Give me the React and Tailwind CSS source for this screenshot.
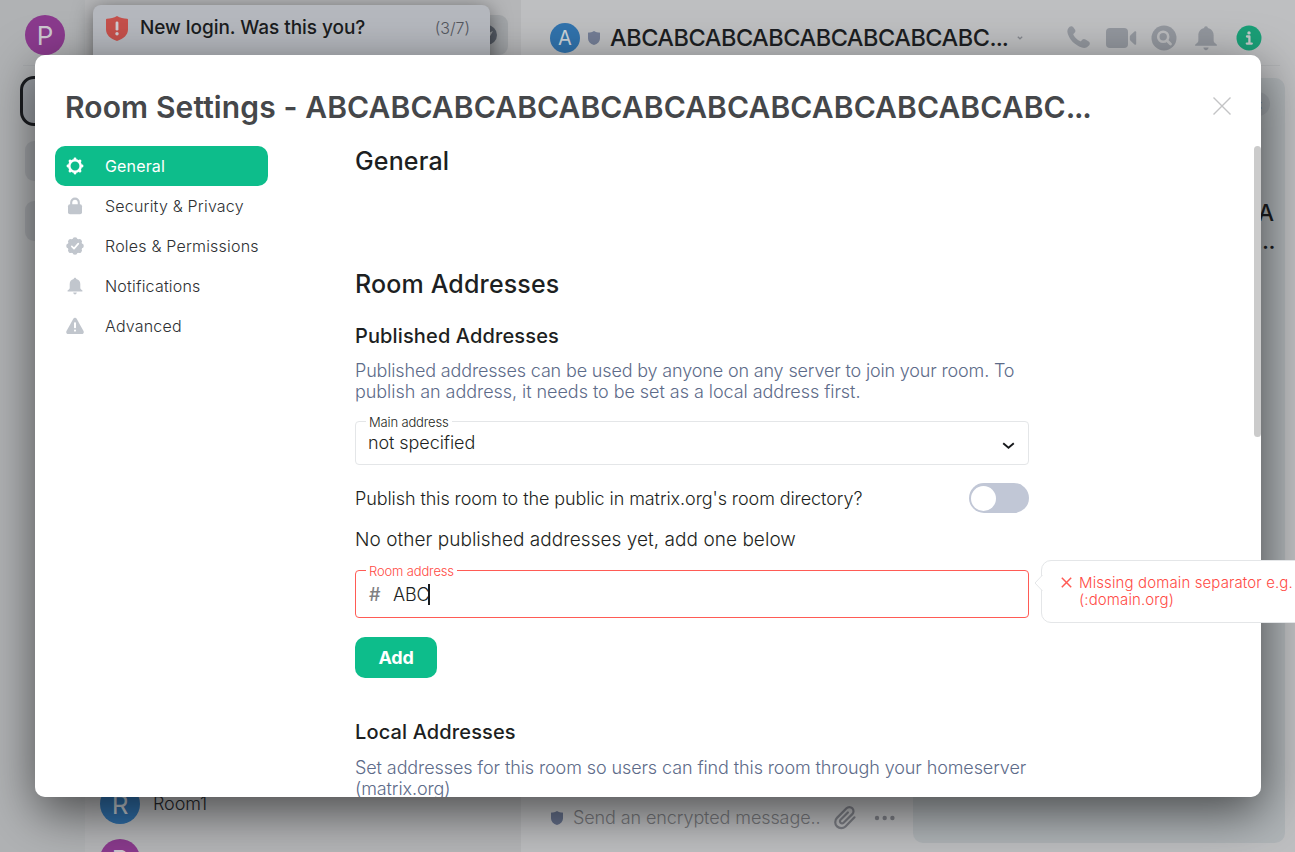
import React from 'react';

const ANGLES = [0, 45, 90, 135, 180, 225, 270, 315];

const GearIcon = () => (
  <svg width="18" height="18" viewBox="0 0 18 18">
    <circle cx="9" cy="9" r="5.7" fill="none" stroke="currentColor" strokeWidth="2.5" />
    {ANGLES.map((a) => (
      <rect key={a} x="7.6" y="0.6" width="2.8" height="3" rx="1.1" fill="currentColor" transform={`rotate(${a} 9 9)`} />
    ))}
  </svg>
);

const LockIcon = () => (
  <svg width="18" height="18" viewBox="0 0 18 18">
    <rect x="2" y="7.2" width="14" height="10" rx="2" fill="currentColor" />
    <path d="M5.2 8.5V5.400a3.800 3.800 0 0 1 7.600 0v3.300" fill="none" stroke="currentColor" strokeWidth="2.1" />
  </svg>
);

const BadgeIcon = () => (
  <svg width="18" height="18" viewBox="0 0 18 18">
    <circle cx="9" cy="9" r="7.4" fill="currentColor" />
    {ANGLES.map((a) => (
      <circle key={a} cx="9" cy="2.6" r="2.4" fill="currentColor" transform={`rotate(${a} 9 9)`} />
    ))}
    <path d="M5.8 9.4l2.2 2.2 4.3-5" fill="none" stroke="#fff" strokeWidth="1.7" strokeLinecap="round" strokeLinejoin="round" />
  </svg>
);

const BellIcon = ({ size = 18 }) => (
  <svg width={size} height={size} viewBox="0 0 18 18">
    <path
      d="M9 .8c.8 0 1.3.6 1.300 1.300C12.900 2.700 14.300 4.700 14.300 7.100v3.600c0 1 .5 1.600 1.500 2.200.5.3.8.7.8 1.100 0 .2-.2.4-.5.4H1.900c-.3 0-.5-.2-.5-.4 0-.4.3-.8.8-1.100 1-.6 1.500-1.200 1.500-2.200V7.100c0-2.400 1.400-4.400 4-5C7.700 1.400 8.200.8 9 .8z"
      fill="currentColor"
    />
    <path d="M7.200 15.600h3.600c-.1 1-.8 1.800-1.800 1.800s-1.700-.8-1.800-1.800z" fill="currentColor" />
  </svg>
);

const WarningIcon = () => (
  <svg width="18" height="18" viewBox="0 0 18 18">
    <path d="M9 .8c.8 0 1.400.4 1.800 1.100l6.700 12.200c.7 1.400-.1 2.900-1.700 2.900H2.200C.6 17-.2 15.500.5 14.100L7.200 1.900C7.600 1.200 8.200.8 9 .8z" fill="currentColor" />
    <rect x="8" y="5.200" width="2" height="6" rx="0.8" fill="#fff" />
    <rect x="8" y="12.400" width="2" height="2.200" rx="0.9" fill="#fff" />
  </svg>
);

const ShieldIcon = ({ className }) => (
  <svg className={className} width="12" height="14" viewBox="0 0 12 14">
    <path d="M6 0c1.700 1 3.800 1.500 5.600 1.600.2 0 .4.2.4.4v5.400c0 3-2.300 5.200-6 6.600C2.300 12.600 0 10.400 0 7.400V2c0-.2.2-.4.4-.4C2.200 1.500 4.300 1 6 0z" fill="currentColor" />
  </svg>
);

const PhoneIcon = () => (
  <svg width="26" height="26" viewBox="0 0 26 26">
    <path
      d="M3.600 1.800c1.200-1 2.700-.9 3.700.4l1.600 2.200c.8 1.100.7 2.400-.3 3.400l-1 .9c-.4.4-.4.8-.1 1.300 1.600 2.700 3.700 4.700 6.400 6.100.5.3.9.2 1.300-.2l1-1.100c.9-1 2.200-1.100 3.300-.3l3.200 2.100c1.300.9 1.500 2.500.5 3.700-1.800 2.300-4.500 3.200-7.400 2.200C8.500 19.900 3.700 14.900 1.700 8.500.9 6 1.500 3.600 3.600 1.800z"
      fill="currentColor"
    />
  </svg>
);

const VideoIcon = () => (
  <svg width="31" height="20" viewBox="0 0 31 20">
    <rect x="0" y="0" width="22" height="20" rx="4" fill="currentColor" />
    <path d="M24.500 7.200l4-3.600c.7-.6 1.700-.2 1.700.7v11.400c0 .9-1 1.300-1.700.7l-4-3.600c-.5-.5-.7-1-.7-1.700V8.900c0-.7.2-1.200.7-1.700z" fill="currentColor" />
  </svg>
);

const SearchIcon = () => (
  <svg width="26" height="26" viewBox="0 0 26 26">
    <circle cx="13" cy="13" r="12.500" fill="currentColor" />
    <circle cx="12.200" cy="11.800" r="5" fill="none" stroke="#bbbcbe" strokeWidth="2.600" />
    <path d="M15.900 15.500l3.600 3.500" stroke="#bbbcbe" strokeWidth="2.800" strokeLinecap="round" />
  </svg>
);

const InfoIcon = () => (
  <svg width="26" height="26" viewBox="0 0 26 26">
    <circle cx="13" cy="13" r="12.500" fill="#1a9f77" />
    <circle cx="13" cy="7.900" r="1.700" fill="#c4c8c8" />
    <path d="M11 11.500h2.400v7M10.800 18.600h5" fill="none" stroke="#c4c8c8" strokeWidth="2.300" strokeLinecap="round" strokeLinejoin="round" />
  </svg>
);

const TABS = [
  { label: 'General', Icon: GearIcon, active: true },
  { label: 'Security & Privacy', Icon: LockIcon },
  { label: 'Roles & Permissions', Icon: BadgeIcon },
  { label: 'Notifications', Icon: BellIcon },
  { label: 'Advanced', Icon: WarningIcon },
];

function Backdrop() {
  return (
    <div className="flex h-full w-full">
      <div className="flex w-[85px] shrink-0 flex-col bg-[#b0b2b4] pt-[15px]">
        <div className="ml-[25px] flex h-10 w-10 items-center justify-center rounded-full bg-[#8a3a8d] text-[26px] text-[#ccc7cf]">P</div>
        <div className="mt-[10px] ml-[23px] h-px w-10 bg-[#a8aaad]" />
        <div className="mt-[10px] ml-5 h-[50px] w-[50px] rounded-[14px] border-[3px] border-[#1a1c20] bg-[#9b9fa5]" />
        <div className="mt-[15px] ml-[25px] h-10 w-10 rounded-[9px] bg-[#a0a3a7]" />
        <div className="mt-5 ml-[25px] h-10 w-10 rounded-[9px] bg-[#a0a3a7]" />
      </div>
      <div className="flex w-[436px] shrink-0 flex-col overflow-hidden bg-[#b5b6b8] pt-[15px] *:shrink-0">
        <div className="ml-[383px] flex h-10 w-10 items-center justify-center rounded-[9px] bg-[#a4a7aa]">
          <svg width="26" height="26" viewBox="0 0 26 26">
            <circle cx="12" cy="13" r="10" fill="#5b626c" />
            <path d="M18 9l-4 7-7 3 4-7z" fill="#a4a7aa" />
          </svg>
        </div>
        <div className="mt-[729px] ml-[15px] flex h-10 items-center gap-[13px]">
          <div className="flex h-10 w-10 items-center justify-center rounded-full bg-[#2f6ea8] text-[26px] text-[#c5ccd2]">R</div>
          <span className="pb-[2px] text-[18px] font-light tracking-[-0.1px] text-[#25272b]">Room1</span>
        </div>
        <div className="mt-[15px] ml-[15px] flex h-10 w-10 items-center justify-center rounded-full bg-[#8a3a8d] text-[26px] text-[#ccc7cf]">P</div>
      </div>
      <div className="flex min-w-0 flex-1 flex-col bg-[#bebfc1]">
        <div className="flex h-[65px] shrink-0 items-center pt-[11px] pl-[29px]">
          <div className="flex h-[30px] w-[30px] items-center justify-center rounded-full bg-[#3173ad] text-[20px] text-[#cdd3d8]">A</div>
          <ShieldIcon className="ml-2 shrink-0 text-[#747e96]" />
          <div className="ml-[10px] w-[400px] text-[23.5px] font-[550] tracking-[-0.48px] whitespace-nowrap text-[#1c1e22]">
            ABCABCABCABCABCABCABCABC<span className="tracking-[-1px]">...</span>
          </div>
          <svg className="ml-[7px]" width="6" height="4" viewBox="0 0 6 4"><path d="M.8.8L3 2.800 5.200.8" fill="none" stroke="#85888e" strokeWidth="1.300" /></svg>
          <div className="ml-[43px] flex items-center text-[#93979e]">
            <PhoneIcon />
            <div className="ml-[14px]"><VideoIcon /></div>
            <div className="ml-[14px]"><SearchIcon /></div>
            <div className="ml-[16px]"><BellIcon size={26} /></div>
            <div className="ml-[17px]"><InfoIcon /></div>
          </div>
        </div>
        <div className="mr-[15px] ml-[10px] h-px bg-[#b4b6b8]" />
        <div className="flex flex-1 pt-[12px]">
          <div className="flex w-[392px] flex-col justify-end">
            <div className="mb-[21px] flex items-center pl-[30px]">
              <ShieldIcon className="shrink-0 text-[#65708b]" />
              <span className="ml-[10px] w-[248px] text-[18px] font-light tracking-[-0.1px] whitespace-nowrap text-[#77787c]">Send an encrypted message..</span>
              <svg className="ml-[12px]" width="24" height="26" viewBox="0 0 24 26">
                <path d="M21.500 12.300l-9 9.100a6 6 0 0 1-8.500 0 6 6 0 0 1 0-8.500l9.500-9.600a4.100 4.100 0 0 1 5.800 0 4.100 4.100 0 0 1 0 5.800l-8.700 8.700a2.100 2.100 0 0 1-3 0 2.100 2.100 0 0 1 0-3l7.300-7.300" fill="none" stroke="#7d7f86" strokeWidth="2.200" strokeLinecap="round" />
              </svg>
              <svg className="ml-[17px]" width="22" height="6" viewBox="0 0 22 6">
                <g fill="#7d7f86"><circle cx="3" cy="3" r="2.200" /><circle cx="10.700" cy="3" r="2.200" /><circle cx="18.400" cy="3" r="2.200" /></g>
              </svg>
            </div>
          </div>
          <div className="mb-[9px] flex w-[372px] flex-col items-end rounded-[10px] bg-[#b0b5b8] pt-[14px]">
            <div className="mr-[15px] flex h-6 w-6 items-center justify-center rounded-full bg-[#a3a8ad] text-[16px] text-[#6f747b]">×</div>
            <div className="mt-[83px] mr-[11px] text-right text-[23px] leading-[28px] font-[550] text-[#1c1e22]">ABCABCA<br />BCA<span className="-mr-[1px] tracking-[-0.5px]">...</span></div>
          </div>
        </div>
      </div>
    </div>
  );
}

function Toast() {
  return (
    <div className="absolute top-[5px] left-[93px] flex h-[100px] w-[397px] items-start rounded-lg bg-[#b5b8be] px-[13px] pt-[11px] shadow-[0_4px_20px_rgba(0,0,0,0.5)]">
      <svg width="22" height="25" viewBox="0 0 22 25">
        <path d="M11 0c3 1.800 6.700 2.500 10.100 2.700.5 0 .9.3.9.8v9.700c0 5.600-4.300 9.500-11 11.800C4.300 22.700 0 18.800 0 13.200V3.500c0-.5.4-.8.9-.8C4.300 2.500 8 1.800 11 0z" fill="#c5504b" />
        <path d="M11 6.800v6.400" stroke="#cfcbd0" strokeWidth="2.800" strokeLinecap="round" />
        <circle cx="11" cy="17.800" r="1.700" fill="#cfcbd0" />
      </svg>
      <span className="ml-[12px] text-[19px] leading-6 font-[550] tracking-[-0.05px] whitespace-nowrap text-[#1a1c20]">New login. Was this you?</span>
      <span className="ml-auto pr-[7px] text-[16px] leading-6 font-light text-[#54575e]">(3/7)</span>
    </div>
  );
}

function Field({ label, className, labelClass, children }) {
  return (
    <div className={`relative flex items-center rounded border ${className}`}>
      <span className={`absolute -top-[7px] left-[10px] bg-white px-[3px] text-[13px] leading-[14px] whitespace-nowrap ${labelClass}`}>{label}</span>
      {children}
    </div>
  );
}

function GeneralPane() {
  return (
    <div className="flex w-[674px] shrink-0 flex-col text-[18px] leading-[21px] font-light text-[#1d1f22] *:shrink-0">
      <h2 className="h-[30px] text-[25px] leading-[30px] font-[550] tracking-[0.15px]">General</h2>
      <h2 className="mt-[93px] h-[30px] text-[25px] leading-[30px] font-[550] tracking-[0.15px]">Room Addresses</h2>
      <h3 className="mt-[25px] h-[24px] text-[20px] leading-[24px] font-[550] tracking-[0.13px]">Published Addresses</h3>
      <p className="mt-3 tracking-[-0.155px] whitespace-nowrap text-[#5d6b89]">Published addresses can be used by anyone on any server to join your room. To<br /><span className="tracking-[-0.05px]">publish an address, it needs to be set as a local address first.</span></p>
      <Field label="Main address" className="mt-[19px] h-[44px] border-[#e4e6e8] pr-[13px] pl-3" labelClass="font-light text-[#1d1f22] tracking-[-0.15px]">
        <span className="-mt-px flex-1 tracking-[-0.08px]">not specified</span>
        <svg width="13" height="8" viewBox="0 0 13 8" className="mt-[5px]"><path d="M1.200 1.300l5.300 4.500 5.300-4.500" fill="none" stroke="#17191c" strokeWidth="1.900" /></svg>
      </Field>
      <div className="mt-[18px] flex h-[30px] items-center justify-between">
        <span className="tracking-[-0.08px]">Publish this room to the public in matrix.org's room directory?</span>
        <div className="flex h-[30px] w-[60px] items-center rounded-full bg-[#c1c7d6] pl-[2px]"><div className="h-[25px] w-[25px] rounded-full bg-white" /></div>
      </div>
      <p className="mt-4 text-[19px] tracking-[0.04px] whitespace-nowrap">No other published addresses yet, add one below</p>
      <Field label="Room address" className="mt-5 h-[48px] border-[#ff5b55] pl-3" labelClass="font-light text-[#ff4b45] tracking-[-0.15px]">
        <span className="w-[25px] pl-px font-medium text-[#808082]">#</span>
        <span className="text-[18px] tracking-[-0.2px]">ABC</span>
        <span className="-ml-px h-[21px] w-[2px] bg-[#17191c]" />
      </Field>
      <button className="mt-[19px] h-[41px] w-[82px] rounded-[10px] bg-[#0dbd8b] text-[18px] font-bold tracking-[-0.2px] text-white">Add</button>
      <h3 className="mt-[42px] h-[24px] text-[20px] leading-[24px] font-[550] tracking-[0.13px]">Local Addresses</h3>
      <p className="mt-[13px] tracking-[-0.1px] whitespace-nowrap text-[#5d6b89]">Set addresses for this room so users can find this room through your homeserver<br />(matrix.org)</p>
    </div>
  );
}

function Dialog() {
  return (
    <div className="absolute top-[55px] left-[35px] flex h-[742px] w-[1226px] flex-col overflow-hidden rounded-[10px] bg-white">
      <div className="flex h-[91px] shrink-0 items-center justify-between pt-[13px] pr-[30px] pl-[30px]">
        <h1 className="text-[30px] font-semibold tracking-[0.12px] whitespace-nowrap text-[#45474a]">
          Room Settings - ABCABCABCABCABCABCABCABCABCABCABCABC<span className="tracking-[-1.3px]">...</span>
        </h1>
        <svg className="mb-[2px]" width="18" height="18" viewBox="0 0 18 18"><path d="M.5.5l17 17M17.500.5l-17 17" stroke="#c3c4c5" strokeWidth="1.400" /></svg>
      </div>
      <div className="flex min-h-0 flex-1 pl-5">
        <nav className="mr-[87px] w-[213px] shrink-0">
          {TABS.map(({ label, Icon, active }) => (
            <div key={label} className={`flex h-10 items-center rounded-[10px] pl-[11px] text-[16px] whitespace-nowrap ${active ? 'bg-[#0dbd8b] font-normal tracking-[0.15px] text-white' : 'font-light tracking-[0.2px] text-[#2e3033]'}`}>
              <span className={active ? 'text-white' : 'text-[#c1c6cd]'}><Icon /></span>
              <span className="ml-[21px]">{label}</span>
            </div>
          ))}
        </nav>
        <GeneralPane />
        <div className="ml-auto h-[291px] w-[7px] rounded-full bg-[#cbcbcb]" />
      </div>
    </div>
  );
}

function Tooltip() {
  return (
    <div className="absolute top-[560px] left-[1041px] flex h-[63px] w-[290px] rounded-[10px] border border-[#e4e6e8] bg-white pt-[13px] pl-[19px] text-[15px] leading-[17px] font-light tracking-[0.12px] text-[#ff4b45]">
      <svg className="absolute top-[14px] -left-[8px]" width="9" height="16" viewBox="0 0 9 16"><path d="M8.500 0L1 8l7.500 8" fill="#fff" stroke="#e4e6e8" /></svg>
      <svg className="mt-[3px] shrink-0" width="11" height="11" viewBox="0 0 11 11"><path d="M.8.800l9.400 9.400M10.200.800L.8 10.200" stroke="#ff5b55" strokeWidth="1.500" /></svg>
      <span className="ml-[7px] whitespace-nowrap">Missing domain separator e.g.<br />(:domain.org)</span>
    </div>
  );
}

export default function App() {
  return (
    <div className="relative h-[852px] w-[1295px] overflow-hidden font-['Inter',sans-serif]">
      <Backdrop />
      <Toast />
      <div className="absolute top-[55px] left-[35px] h-[742px] w-[1226px] rounded-[10px] shadow-[2px_15px_50px_rgba(0,0,0,0.6)]" />
      <Dialog />
      <Tooltip />
    </div>
  );
}
